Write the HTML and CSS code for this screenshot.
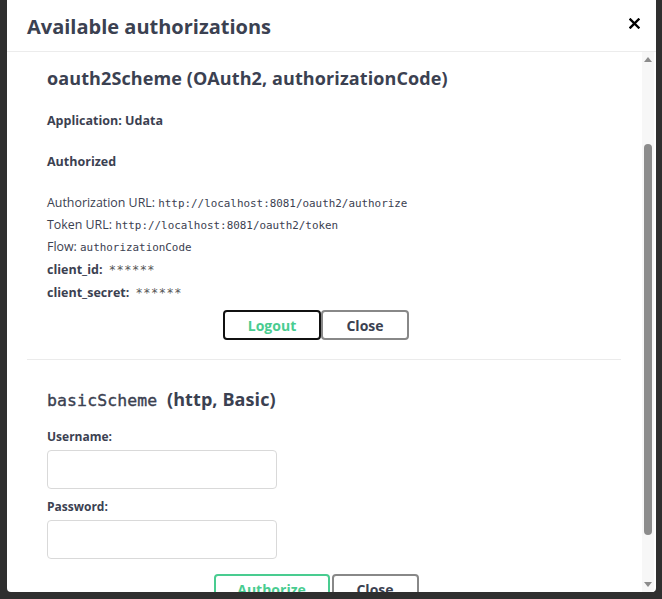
FILE: index.html
```html
<!DOCTYPE html>
<html>
<head>
<meta charset="utf-8">
<link rel="stylesheet" href="styles.css">
</head>
<body>
<div class="modal">
  <div class="modal-header">
    <h3 class="modal-title">Available authorizations</h3>
    <button class="close-x" aria-label="close">
      <svg width="11" height="11" viewBox="0 0 11 11"><path d="M1.5 1.5 L9.5 9.5 M9.5 1.5 L1.5 9.5" stroke="#000" stroke-width="2.4" stroke-linecap="square"/></svg>
    </button>
  </div>
  <div class="modal-body">
    <div class="auth">
      <h4 class="scheme-title">oauth2Scheme (OAuth2, authorizationCode)</h4>
      <p class="bold app">Application: Udata</p>
      <p class="bold authorized">Authorized</p>
      <p class="row first">Authorization URL: <code>http://localhost:8081/oauth2/authorize</code></p>
      <p class="row">Token URL: <code>http://localhost:8081/oauth2/token</code></p>
      <p class="row">Flow: <code>authorizationCode</code></p>
      <p class="row cred"><span class="lbl">client_id:</span> <code class="stars">******</code></p>
      <p class="row cred"><span class="lbl">client_secret:</span> <code class="stars">******</code></p>
      <div class="btns btns-1">
        <button class="btn logout">Logout</button>
        <button class="btn close">Close</button>
      </div>
    </div>
    <hr class="divider">
    <div class="auth">
      <h4 class="scheme-title basic"><code class="scheme-code">basicScheme</code>&nbsp; (http, Basic)</h4>
      <label class="bold field-label user">Username:</label>
      <input class="field" type="text">
      <label class="bold field-label pass">Password:</label>
      <input class="field" type="password">
      <div class="btns btns-2">
        <button class="btn authorize">Authorize</button>
        <button class="btn close close-2">Close</button>
      </div>
    </div>
  </div>
  <div class="scrollbar">
    <span class="arrow up"></span>
    <span class="thumb"></span>
    <span class="arrow down"></span>
  </div>
</div>
</body>
</html>
```

FILE: styles.css
```css
* { box-sizing: border-box; }
html, body { margin: 0; padding: 0; }
body {
  background: #2f2f2f;
  width: 662px;
  height: 599px;
  overflow: hidden;
  font-family: "Open Sans", "DejaVu Sans", sans-serif;
  color: #3b4151;
}
.modal {
  position: relative;
  margin-left: 7px;
  width: 649px;
  height: 592px;
  background: #fff;
  border-radius: 0 0 4px 4px;
  overflow: hidden;
}
.modal-header {
  height: 52px;
  border-bottom: 1px solid #ececec;
  display: flex;
  align-items: center;
  justify-content: space-between;
  padding: 0 16px 0 20px;
}
.modal-title {
  margin: 0;
  font-size: 20px;
  font-weight: 700;
  color: #3b4151;
  position: relative;
  top: 1px;
}
.close-x {
  border: 0;
  background: none;
  padding: 0;
  width: 11px;
  height: 11px;
  display: flex;
  position: relative;
  top: -2px;
}
.modal-body {
  height: 540px;
  overflow: hidden;
  padding: 0 35px 0 20px;
}
.auth { padding: 0 20px; display: flex; flex-direction: column; align-items: flex-start; }
.scheme-title {
  margin: 14px 0 0;
  font-size: 18px;
  line-height: 24px;
  font-weight: 700;
  color: #3b4151;
  letter-spacing: 0.1px;
}
p { margin: 0; }
.bold { font-weight: 700; font-size: 12.5px; line-height: 18px; }
.app { margin-top: 22px; }
.authorized { margin-top: 23px; }
.row { font-size: 12.4px; line-height: 21px; }
.row.first { margin-top: 21px; }
code {
  font-family: "DejaVu Sans Mono", "Liberation Mono", monospace;
  font-size: 10.9px;
}
.cred { line-height: 22px; margin-top: 1px; }
.lbl { font-weight: 700; font-size: 12.5px; }
.stars { font-size: 12px; color: #555; letter-spacing: 0.5px; margin-left: 3px; }
.btns {
  display: flex;
  align-self: stretch;
  justify-content: center;
  padding-right: 16px;
}
.btns-1 { margin-top: 6px; gap: 0; }
.btns-2 { margin-top: 15px; gap: 2px; }
.btn {
  height: 30px;
  background: #fff;
  border-radius: 4px;
  font-family: "Open Sans", "DejaVu Sans", sans-serif;
  font-weight: 700;
  font-size: 14px;
  padding: 0;
  color: #3b4151;
}
.logout { width: 98px; border: 2px solid #111; color: #49cc90; }
.close { width: 88px; border: 2px solid #888; }
.authorize { width: 116px; border: 2px solid #49cc90; color: #49cc90; }
.close-2 { width: 87px; }
.divider {
  margin: 19px 0 0;
  border: 0;
  border-top: 1px solid #ebebeb;
  width: 594px;
}
.basic { margin-top: 27px; }
.scheme-code {
  font-size: 16.5px;
  font-weight: 400;
  color: #3b4151;
  -webkit-text-stroke: 0.35px #3b4151;
}
.field-label { display: block; font-size: 12px; }
.user { margin-top: 15px; }
.pass { margin-top: 9px; }
.field {
  width: 230px;
  height: 39px;
  margin-top: 4px;
  border: 1px solid #d9d9d9;
  border-radius: 4px;
  background: #fff;
}
.scrollbar {
  position: absolute;
  right: 2px;
  top: 52px;
  bottom: 0;
  width: 12px;
  background: #f7f7f7;
}
.thumb {
  position: absolute;
  left: 2px;
  width: 8px;
  top: 92px;
  height: 391px;
  background: #8c8c8c;
  border-radius: 4px;
}
.arrow {
  position: absolute;
  left: 2px;
  width: 0;
  height: 0;
  border-left: 4px solid transparent;
  border-right: 4px solid transparent;
}
.arrow.up { top: 5px; border-bottom: 5px solid #8c8c8c; }
.arrow.down { bottom: 5px; border-top: 5px solid #8c8c8c; }
```
